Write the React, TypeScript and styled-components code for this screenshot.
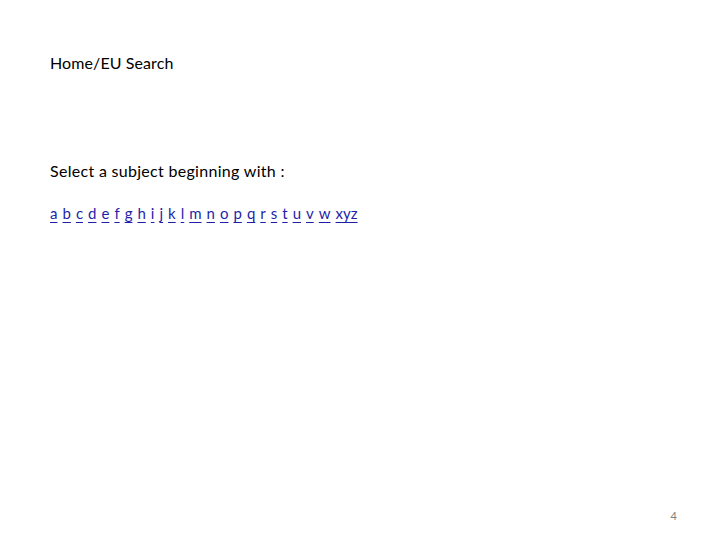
import React from "react";
import styled, { createGlobalStyle } from "styled-components";

const GlobalStyle = createGlobalStyle`
  html, body {
    margin: 0;
    padding: 0;
    background: #fff;
  }
  body {
    font-family: Lato, "Open Sans", "Liberation Sans", sans-serif;
    color: #000;
  }
`;

const Slide = styled.div`
  width: 720px;
  height: 540px;
  box-sizing: border-box;
  padding: 53px 50px 0 50px;
  position: relative;
  display: flex;
  flex-direction: column;
`;

const Breadcrumb = styled.div`
  font-size: 16px;
  line-height: 20px;
  letter-spacing: 0.1px;
`;

const Prompt = styled.div`
  margin-top: 88px;
  font-size: 16px;
  line-height: 20px;
  letter-spacing: 0.3px;
`;

const LetterRow = styled.nav`
  margin-top: 22px;
  display: flex;
  gap: 5px;
  font-size: 15px;
  line-height: 20px;
`;

const LetterLink = styled.a`
  color: #1f1fa8;
  text-decoration: underline;
  text-underline-offset: 3px;
  cursor: pointer;
`;

const PageNumber = styled.div`
  position: absolute;
  right: 43px;
  bottom: 18px;
  font-size: 11px;
  color: #7f7f7f;
`;

const letters = [
  "a", "b", "c", "d", "e", "f", "g", "h", "i", "j", "k", "l", "m",
  "n", "o", "p", "q", "r", "s", "t", "u", "v", "w", "xyz",
];

const App: React.FC = () => {
  return (
    <>
      <GlobalStyle />
      <Slide>
        <Breadcrumb>Home/EU Search</Breadcrumb>
        <Prompt>Select a subject beginning with :</Prompt>
        <LetterRow>
          {letters.map((l) => (
            <LetterLink key={l} href="#">
              {l}
            </LetterLink>
          ))}
        </LetterRow>
        <PageNumber>4</PageNumber>
      </Slide>
    </>
  );
};

export default App;
